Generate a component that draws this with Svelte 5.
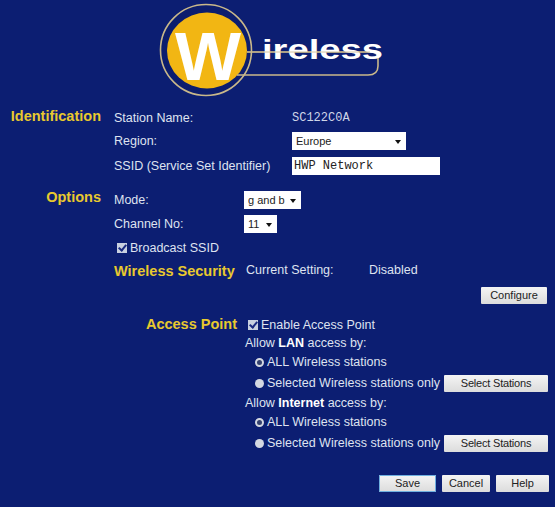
<script>
	const lanStations = [
		{ label: 'ALL Wireless stations', checked: true },
		{ label: 'Selected Wireless stations only', checked: false, select: true }
	];
</script>

<div class="page">
	<header class="logo">
		<svg width="270" height="100" viewBox="0 0 270 100" aria-label="Wireless logo">
			<circle cx="66" cy="50" r="45.5" fill="#0c1d6e" stroke="#c9b88a" stroke-width="1.6" />
			<ellipse cx="67" cy="50.5" rx="40" ry="38" fill="#f2b613" />
			<path d="M107 52H230Q238 52 238 58V66Q238 75 228 75H97" fill="none" stroke="#c9b88a" stroke-width="1.6" />
			<text x="35" y="80" class="big" textLength="66" lengthAdjust="spacingAndGlyphs">W</text>
			<text x="122" y="59" class="word" textLength="121" lengthAdjust="spacingAndGlyphs">ireless</text>
			<path d="M107 52H230" stroke="#c9b88a" stroke-width="0.8" />
		</svg>
	</header>

	<section class="group identification">
		<h2>Identification</h2>
		<div class="fields">
			<div class="row r-station"><span class="name">Station Name:</span><span class="mono light">SC122C0A</span></div>
			<div class="row r-region">
				<span class="name">Region:</span>
				<span class="select wide"><select><option>Europe</option></select></span>
			</div>
			<div class="row r-ssid">
				<span class="name">SSID (Service Set Identifier)</span>
				<input class="mono" type="text" value="HWP Network" />
			</div>
		</div>
	</section>

	<section class="group options">
		<h2>Options</h2>
		<div class="fields">
			<div class="row r-mode">
				<span class="name short">Mode:</span>
				<span class="select mode"><select><option>g and b</option></select></span>
			</div>
			<div class="row r-channel">
				<span class="name short">Channel No:</span>
				<span class="select channel"><select><option>11</option></select></span>
			</div>
			<label class="check broadcast"><input type="checkbox" checked />Broadcast SSID</label>
			<div class="security">
				<h2>Wireless Security</h2>
				<span class="setting">Current Setting:</span>
				<span>Disabled</span>
			</div>
		</div>
	</section>

	<div class="configure"><button>Configure</button></div>

	<section class="access">
		<h2>Access Point</h2>
		<div class="access-fields">
			<label class="check enable"><input type="checkbox" checked />Enable Access Point</label>
			<div class="allow">Allow <b>LAN</b> access by:</div>
			{#each lanStations as s}
				<div class="station" class:sel={s.select}>
					<span class="radio" class:on={s.checked}></span>{s.label}
					{#if s.select}<button class="pick">Select Stations</button>{/if}
				</div>
			{/each}
			<div class="allow">Allow <b>Internet</b> access by:</div>
			{#each lanStations as s}
				<div class="station" class:sel={s.select}>
					<span class="radio" class:on={s.checked}></span>{s.label}
					{#if s.select}<button class="pick">Select Stations</button>{/if}
				</div>
			{/each}
		</div>
	</section>

	<footer class="actions">
		<button class="save">Save</button>
		<button class="cancel">Cancel</button>
		<button class="help">Help</button>
	</footer>
</div>

<style>
	:global(body) {
		margin: 0;
		background: #0c1e72;
	}
	.page {
		width: 555px;
		height: 507px;
		overflow: hidden;
		background: #0c1e72;
		color: #dfe3f0;
		font: 12.5px/15px 'Liberation Sans', Arial, sans-serif;
		box-sizing: border-box;
	}
	.logo {
		height: 108px;
		padding-left: 140px;
		box-sizing: border-box;
	}
	.logo svg {
		display: block;
	}
	.big {
		font: bold 69px 'Liberation Sans', Arial, sans-serif;
		fill: #fff;
	}
	.word {
		font: bold 27px 'Liberation Sans', Arial, sans-serif;
		fill: #fff;
	}
	h2 {
		margin: 0;
		font-size: 14.5px;
		line-height: 16px;
		font-weight: bold;
		color: #e8c92e;
	}
	.group {
		display: grid;
		grid-template-columns: 101px 1fr;
		column-gap: 13px;
	}
	.group > h2 {
		text-align: right;
	}
	.row {
		display: flex;
		align-items: center;
	}
	.name {
		width: 178px;
	}
	.name.short {
		width: 130px;
	}
	.identification {
		height: 70px;
	}
	.r-station {
		height: 19px;
		padding-top: 1px;
	}
	.r-region {
		height: 26px;
	}
	.r-ssid {
		height: 24px;
	}
	.mono {
		font-family: 'Liberation Mono', monospace;
	}
	.light {
		color: #cfd5e8;
		font-size: 12px;
	}
	.select {
		position: relative;
		display: block;
		height: 18px;
		background: #fff;
	}
	.select select {
		appearance: none;
		display: block;
		width: 100%;
		height: 18px;
		padding: 0 0 0 4px;
		border: 0;
		background: transparent;
		color: #222;
		font: inherit;
		font-size: 11px;
	}
	.select::after {
		content: '';
		position: absolute;
		right: 5px;
		top: 8px;
		border: 3px solid transparent;
		border-top: 4px solid #111;
		border-bottom: 0;
	}
	.wide {
		width: 114px;
	}
	.mode {
		width: 57px;
	}
	.channel {
		width: 33px;
	}
	input[type='text'] {
		width: 148px;
		height: 18px;
		padding: 0 2px;
		box-sizing: border-box;
		border: 0;
		background: #fff;
		color: #222;
		font-size: 12px;
	}
	.options {
		height: 93px;
		padding-top: 11px;
	}
	.r-mode {
		height: 24px;
		margin-top: -1px;
	}
	.r-channel {
		height: 24px;
	}
	.check {
		display: flex;
		align-items: center;
	}
	.check input {
		appearance: none;
		width: 10px;
		height: 10px;
		margin: 0 3px 0 0;
		background: #c8d0e0;
		position: relative;
	}
	.check input::after {
		content: '';
		position: absolute;
		left: 3px;
		top: 0;
		width: 3px;
		height: 6px;
		border: solid #1a2a80;
		border-width: 0 2px 2px 0;
		transform: rotate(40deg);
	}
	.broadcast {
		height: 20px;
		padding: 2px 0 0 3px;
	}
	.security {
		display: flex;
		align-items: center;
		height: 23px;
		padding-top: 1px;
	}
	.security h2 {
		width: 132px;
	}
	.setting {
		width: 123px;
	}
	button {
		padding: 0;
		height: 17px;
		border: 0;
		border-radius: 1px;
		background: linear-gradient(#f4f4f4, #dcdcdc);
		color: #222;
		font: 11px/15px 'Liberation Sans', Arial, sans-serif;
	}
	.configure {
		display: flex;
		justify-content: flex-end;
		padding: 5px 8px 0 0;
		height: 29px;
	}
	.configure button {
		width: 66px;
	}
	.access {
		display: grid;
		grid-template-columns: 237px 1fr;
		column-gap: 8px;
	}
	.access h2 {
		text-align: right;
	}
	.access-fields {
		display: flex;
		flex-direction: column;
	}
	.enable {
		height: 18px;
		padding-left: 3px;
	}
	.allow {
		height: 18px;
		line-height: 18px;
	}
	.allow b {
		color: #fff;
	}
	.station {
		display: flex;
		align-items: center;
		height: 20px;
		padding-left: 10px;
	}
	.station.sel {
		height: 22px;
	}
	.radio {
		width: 9px;
		height: 9px;
		margin-right: 3px;
		border-radius: 50%;
		background: #d4d8e2;
		box-sizing: border-box;
	}
	.radio.on {
		border: 2.5px solid #d4d8e2;
		background: #33406f;
	}
	.pick {
		width: 104px;
		margin-left: 4px;
		letter-spacing: -0.2px;
	}
	.actions {
		display: flex;
		gap: 6px;
		padding: 21px 0 0 379px;
	}
	.save {
		width: 57px;
		box-shadow: 0 0 0 1px #6fb0e0 inset;
	}
	.cancel {
		width: 48px;
	}
	.help {
		width: 53px;
	}
</style>
